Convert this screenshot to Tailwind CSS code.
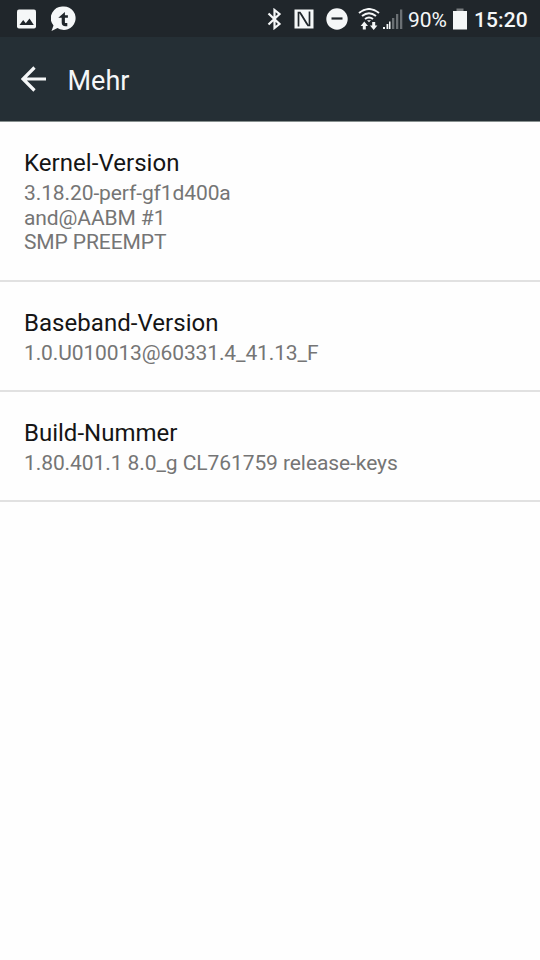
<!DOCTYPE html>
<html lang="de">
<head>
  <meta charset="UTF-8">
  <meta name="viewport" content="width=device-width, initial-scale=1.0">
  <title>Mehr</title>
  <script src="https://cdn.jsdelivr.net/npm/@tailwindcss/browser@4"></script>
</head>
<body class="bg-[#fefefe] min-h-screen font-['Roboto',sans-serif]">
  <!-- Status bar -->
  <div class="h-[37px] bg-[#20262b] text-[#f5f7f8] flex items-center justify-between pl-[17px] pr-[12px]">
    <div class="flex items-center gap-[13.5px]">
      <svg class="w-5 h-5" viewBox="0 0 20 20"><rect x="0" y="0.5" width="19" height="19" rx="2" fill="currentColor"/><path d="M2.500 16l3.700-5 2.600 3.200L12.500 9.500l4.300 6.500z" fill="#20262b"/></svg>
      <svg class="w-[25px] h-[26px]" viewBox="0 0 25 26"><path d="M13 0.500a11.700 11.700 0 1 1-6.500 21.500L0.500 25l2-5.500A11.700 11.700 0 0 1 13 0.500z" fill="currentColor"/><path d="M12.300 11v5.500q0 2.200 2.200 2.200h1.800" fill="none" stroke="#20262b" stroke-width="3.200"/><path d="M7.300 11.800L13.900 6v3.200h3v2.600z" fill="#20262b"/></svg>
    </div>
    <div class="flex items-center">
      <svg class="w-[15px] h-[22px]" viewBox="0 0 15 22" fill="none" stroke="currentColor" stroke-width="2.200"><path d="M1.500 5.500l11 10.500-5 4V2l5 4-11 10.500"/></svg>
      <svg class="w-5 h-5 ml-[12px]" viewBox="0 0 20 20"><rect x="0.500" y="0.500" width="19" height="19" fill="currentColor"/><path d="M4.500 17.500V3.500h1.500L13 15M15.500 2.500v14H14L7 5" fill="none" stroke="#20262b" stroke-width="1.700"/></svg>
      <svg class="w-[22px] h-[22px] ml-[12px]" viewBox="0 0 22 22"><circle cx="11" cy="11" r="10.700" fill="currentColor"/><path d="M5.500 10.500h11" stroke="#20262b" stroke-width="2.200"/></svg>
      <svg class="w-[22px] h-[22px] ml-[10px]" viewBox="0 0 22 22" fill="none" stroke="currentColor" stroke-width="2"><path d="M1 5Q11-3 21 5M4 8Q11 2.500 18 8M7 11Q11 8 15 11"/><path d="M9 12.300h4l-2 2z" fill="currentColor" stroke="none"/><path d="M6.300 16v5.500M15.700 14v5" stroke-width="3"/><path d="M2.600 18L6.300 13.500 10 18zM12 17.500l3.700 4.500 3.700-4.500z" fill="currentColor" stroke="none"/></svg>
      <svg class="w-5 h-[22px] ml-[3px]" viewBox="0 0 20 22" fill="currentColor"><path d="M0 19h2v2H0zM3.500 16h1.800v5H3.500zM6 13.500h1.500V21H6z"/><path d="M9 10h2.300v11H9zM13 6h2.300v15H13zM17 1.500h2.300V21H17z" fill="#6b7074"/></svg>
      <span class="text-[21px] leading-none ml-[5px] mt-[3px] w-[40px] tracking-[-0.1px] whitespace-nowrap">90%</span>
      <svg class="w-4 h-[22px] ml-[4px]" viewBox="0 0 16 22"><path d="M4.500 0.500h7V3h-7z" fill="#777b7e"/><path d="M1 3h14v18.500H1z" fill="currentColor"/></svg>
      <span class="text-[21px] font-medium leading-none ml-[6px] mt-[3px] w-[54px] tracking-[0.1px] whitespace-nowrap">15:20</span>
    </div>
  </div>

  <!-- App bar -->
  <header class="h-[85px] bg-[#252f35] border-b border-[#87908f] text-[#f5f7f8] flex items-center pl-[21px]">
    <svg class="w-[26px] h-[26px]" viewBox="0 0 26 26" fill="none" stroke="currentColor" stroke-width="3.200"><path d="M25 13H2.500M13.500 1.500L2 13l11.500 11.500"/></svg>
    <h1 class="ml-[20.5px] text-[27px] leading-8 mt-[4px]">Mehr</h1>
  </header>

  <main>
    <section class="h-[160px] pt-[27px] pl-6 border-b-2 border-[#e1e1e1]">
      <h2 class="text-2xl leading-7 tracking-[0.05px] text-[#151515]">Kernel-Version</h2>
      <p class="mt-[4px] text-[21px] leading-[24.6px] tracking-[-0.1px] text-[#757575]">3.18.20-perf-gf1d400a<br>and@AABM #1<br>SMP PREEMPT</p>
    </section>
    <section class="h-[110px] pt-[27px] pl-6 border-b-2 border-[#e1e1e1]">
      <h2 class="text-2xl leading-7 tracking-[0.05px] text-[#151515]">Baseband-Version</h2>
      <p class="mt-[4px] text-[21px] leading-[24.6px] tracking-[-0.12px] text-[#757575]">1.0.U010013@60331.4_41.13_F</p>
    </section>
    <section class="h-[110px] pt-[27px] pl-6 border-b-2 border-[#e1e1e1]">
      <h2 class="text-2xl leading-7 text-[#151515]">Build-Nummer</h2>
      <p class="mt-[4px] text-[21px] leading-[24.6px] tracking-[-0.08px] text-[#757575]">1.80.401.1 8.0_g CL761759 release-keys</p>
    </section>
  </main>
</body>
</html>
